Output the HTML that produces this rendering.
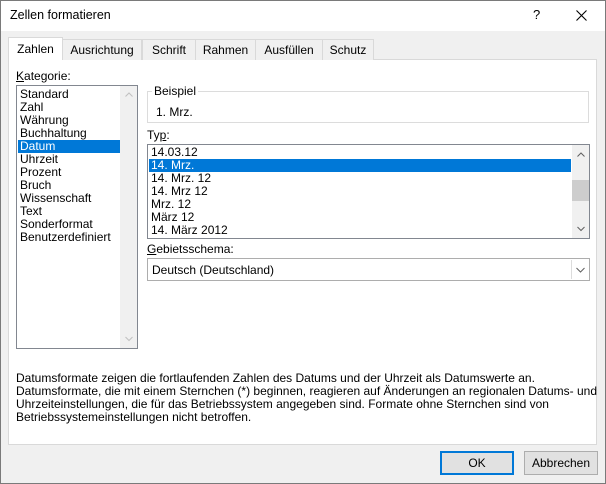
<!DOCTYPE html>
<html><head><meta charset="utf-8"><style>
*{margin:0;padding:0;box-sizing:border-box}
body{width:606px;height:484px;overflow:hidden;background:#f0f0f0;font-family:"Liberation Sans",sans-serif;font-size:12px;color:#000;position:relative}
.a{position:absolute}
.win{left:0;top:0;width:606px;height:484px;border:1px solid #7a7a7a}
.title{left:1px;top:1px;width:604px;height:30px;background:#fff}
.tab{top:39px;height:21px;border:1px solid #d9d9d9;border-bottom:none;background:#f0f0f0;text-align:center;line-height:20px;font-size:12px}
.panel{left:8px;top:59px;width:589px;height:386px;background:#fff;border:1px solid #d9d9d9}
.lb{border:1px solid #828790;background:#fff}
.it{position:absolute;left:3px;font-size:12px;line-height:13px;white-space:nowrap}
.sel{background:#0078d7;color:#fff}
.btn{top:451px;height:24px;width:74px;border:1px solid #adadad;background:#e1e1e1;text-align:center;line-height:22px;font-size:12px}
</style></head><body>
<div class="a win"></div>
<div class="a title"></div>
<div class="a" style="left:10px;top:8px;font-size:12.5px">Zellen formatieren</div>
<div class="a" style="left:533px;top:7px;font-size:13px">?</div>
<svg class="a" style="left:576px;top:10px" width="11" height="11"><path d="M0.5 0.5L10.5 10.5M10.5 0.5L0.5 10.5" stroke="#000" stroke-width="1.1"/></svg>
<div class="a panel"></div>
<div class="a tab" style="left:8px;top:37px;height:23px;width:55px;background:#fff;z-index:2;line-height:22px">Zahlen</div>
<div class="a tab" style="left:62px;width:80px">Ausrichtung</div>
<div class="a tab" style="left:142px;width:54px">Schrift</div>
<div class="a tab" style="left:195px;width:61px">Rahmen</div>
<div class="a tab" style="left:255px;width:68px">Ausfüllen</div>
<div class="a tab" style="left:322px;width:52px">Schutz</div>

<div class="a" style="left:16px;top:69px"><u>K</u>ategorie:</div>
<div class="a lb" style="left:16px;top:85px;width:122px;height:264px">
<div class="a" style="left:103px;top:0;width:17px;height:262px;background:#f0f0f0"></div>
<svg class="a" style="left:108px;top:6px" width="8" height="6"><path d="M0.5 4.5L4 1L7.5 4.5" fill="none" stroke="#c0c0c0"/></svg>
<svg class="a" style="left:108px;top:250px" width="8" height="6"><path d="M0.5 1L4 4.5L7.5 1" fill="none" stroke="#c0c0c0"/></svg>
<div class="it" style="top:2px">Standard</div>
<div class="it" style="top:15px">Zahl</div>
<div class="it" style="top:28px">Währung</div>
<div class="it" style="top:41px">Buchhaltung</div>
<div class="it sel" style="left:1px;padding-left:2px;top:54px;width:102px">Datum</div>
<div class="it" style="top:67px">Uhrzeit</div>
<div class="it" style="top:80px">Prozent</div>
<div class="it" style="top:93px">Bruch</div>
<div class="it" style="top:106px">Wissenschaft</div>
<div class="it" style="top:119px">Text</div>
<div class="it" style="top:132px">Sonderformat</div>
<div class="it" style="top:145px">Benutzerdefiniert</div>
</div>

<div class="a" style="left:147px;top:91px;width:442px;height:32px;border:1px solid #dcdcdc"></div>
<div class="a" style="left:152px;top:84px;background:#fff;padding:0 2px">Beispiel</div>
<div class="a" style="left:156px;top:105px">1. Mrz.</div>

<div class="a" style="left:147px;top:128px">Ty<u>p</u>:</div>
<div class="a lb" style="left:147px;top:144px;width:443px;height:95px">
<div class="a" style="left:424px;top:0;width:17px;height:93px;background:#f0f0f0"></div>
<div class="a" style="left:424px;top:35px;width:17px;height:21px;background:#cdcdcd"></div>
<svg class="a" style="left:429px;top:7px" width="8" height="6"><path d="M0.5 4.5L4 1L7.5 4.5" fill="none" stroke="#606060"/></svg>
<svg class="a" style="left:429px;top:81px" width="8" height="6"><path d="M0.5 1L4 4.5L7.5 1" fill="none" stroke="#606060"/></svg>
<div class="it" style="top:1px">14.03.12</div>
<div class="it sel" style="left:1px;padding-left:2px;top:14px;width:422px">14. Mrz.</div>
<div class="it" style="top:27px">14. Mrz. 12</div>
<div class="it" style="top:40px">14. Mrz 12</div>
<div class="it" style="top:53px">Mrz. 12</div>
<div class="it" style="top:66px">März 12</div>
<div class="it" style="top:79px">14. März 2012</div>
</div>

<div class="a" style="left:147px;top:242px"><u>G</u>ebietsschema:</div>
<div class="a" style="left:147px;top:258px;width:443px;height:23px;border:1px solid #adadad;background:#fff">
<div class="a" style="left:4px;top:4px">Deutsch (Deutschland)</div>
<div class="a" style="left:423px;top:1px;width:18px;height:19px;border-left:1px solid #dcdcdc;background:#fff"></div>
<svg class="a" style="left:428px;top:8px" width="9" height="6"><path d="M0.5 1L4.5 5L8.5 1" fill="none" stroke="#606060"/></svg>
</div>

<div class="a" style="left:16px;top:372px;line-height:13px;font-size:12px;width:590px;white-space:nowrap">Datumsformate zeigen die fortlaufenden Zahlen des Datums und der Uhrzeit als Datumswerte an.<br>Datumsformate, die mit einem Sternchen (*) beginnen, reagieren auf Änderungen an regionalen Datums- und<br>Uhrzeiteinstellungen, die für das Betriebssystem angegeben sind. Formate ohne Sternchen sind von<br>Betriebssystemeinstellungen nicht betroffen.</div>

<div class="a btn" style="left:440px;border:2px solid #0078d7;line-height:20px">OK</div>
<div class="a btn" style="left:524px">Abbrechen</div>
</body></html>
